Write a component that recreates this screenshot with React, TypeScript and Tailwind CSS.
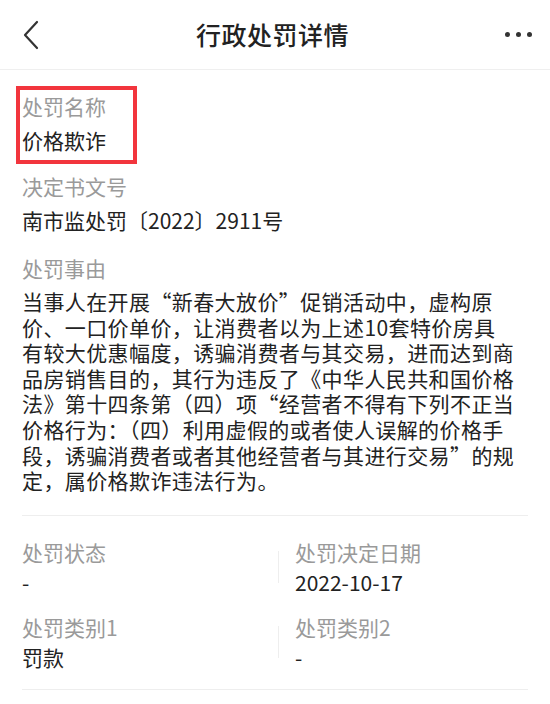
import React from 'react';

const font = { fontFamily: '"Noto Sans CJK SC", "Noto Sans", sans-serif' };

const reasonLines = [
  '当事人在开展“新春大放价”促销活动中，虚构原',
  '价、一口价单价，让消费者以为上述10套特价房具',
  '有较大优惠幅度，诱骗消费者与其交易，进而达到商',
  '品房销售目的，其行为违反了《中华人民共和国价格',
  '法》第十四条第（四）项“经营者不得有下列不正当',
  '价格行为：（四）利用虚假的或者使人误解的价格手',
  '段，诱骗消费者或者其他经营者与其进行交易”的规',
  '定，属价格欺诈违法行为。',
];

const Cell: React.FC<{ label: string; value: string; divider?: boolean }> = ({ label, value, divider }) => (
  <div className="flex items-center">
    {divider && <div className="w-px h-8 bg-[#eeeeee] ml-[3px] mr-[16px]"></div>}
    <div>
      <div className="text-[21px] leading-[30px] text-[#9a9a9a]">{label}</div>
      <div className="text-[21px] leading-[30px] text-[#222222]">{value}</div>
    </div>
  </div>
);

const App: React.FC = () => {
  return (
    <div className="w-[550px] min-h-[704px] bg-white" style={font}>
      {/* 顶部导航 */}
      <div className="h-[70px] flex items-center justify-between px-[20px] border-b border-[#efefef]">
        <svg width="18" height="30" viewBox="0 0 18 30" fill="none" className="ml-[2px]">
          <path d="M15 2 L3 15 L15 28" stroke="#333" strokeWidth="2.2" strokeLinecap="round" strokeLinejoin="round" />
        </svg>
        <h1 className="text-[25px] font-medium text-[#222222] tracking-[0.5px]">行政处罚详情</h1>
        <div className="flex items-center gap-[6px] mr-[-2px]">
          <div className="w-[5px] h-[5px] rounded-full bg-[#333]"></div>
          <div className="w-[5px] h-[5px] rounded-full bg-[#333]"></div>
          <div className="w-[5px] h-[5px] rounded-full bg-[#333]"></div>
        </div>
      </div>

      <div className="px-[22px] pt-[19px]">
        {/* 处罚名称 */}
        <div className="relative">
          <div className="absolute left-[-6px] top-[-3px] w-[121px] h-[78px] border-[4px] border-[#f2353d]"></div>
          <div className="text-[21px] leading-[34px] text-[#9a9a9a]">处罚名称</div>
          <div className="text-[21px] leading-[34px] text-[#222222]">价格欺诈</div>
        </div>

        {/* 决定书文号 */}
        <div className="mt-[12px]">
          <div className="text-[21px] leading-[34px] text-[#9a9a9a]">决定书文号</div>
          <div className="text-[21px] leading-[34px] text-[#222222]">南市监处罚〔2022〕2911号</div>
        </div>

        {/* 处罚事由 */}
        <div className="mt-[14px]">
          <div className="text-[21px] leading-[34px] text-[#9a9a9a]">处罚事由</div>
          <div className="mt-[4px] text-[21px] leading-[25.6px] text-[#222222] tracking-[0.4px]">
            {reasonLines.map((line) => (
              <div key={line} className="whitespace-nowrap">{line}</div>
            ))}
          </div>
        </div>

        {/* 状态 / 日期 / 类别 */}
        <div className="mt-[21px] border-t border-[#eeeeee] pt-[21px] pb-[17px] border-b">
          <div className="grid grid-cols-2 gap-y-[15px]">
            <Cell label="处罚状态" value="-" />
            <Cell label="处罚决定日期" value="2022-10-17" divider />
            <Cell label="处罚类别1" value="罚款" />
            <Cell label="处罚类别2" value="-" divider />
          </div>
        </div>
      </div>
    </div>
  );
};

export default App;
